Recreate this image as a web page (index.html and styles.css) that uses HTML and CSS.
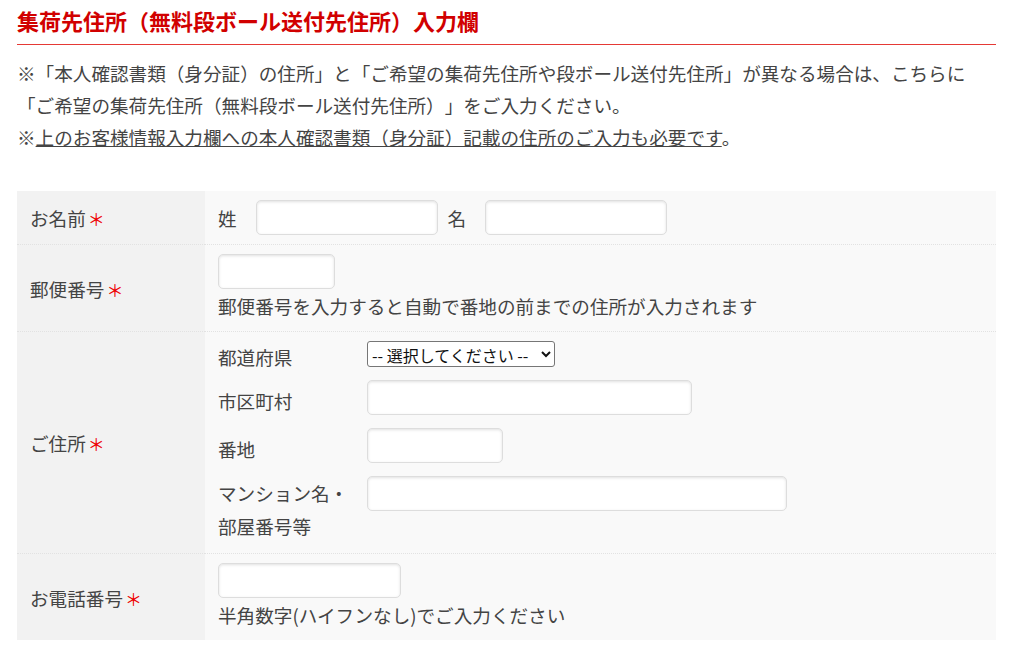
FILE: index.html
```html
<!DOCTYPE html>
<html lang="ja">
<head>
    <meta charset="UTF-8">
    <meta name="viewport" content="width=device-width, initial-scale=1.0">
    <title>集荷先住所入力欄</title>
    <link rel="stylesheet" href="styles.css">
</head>
<body>
    <div class="container">
        <h2 class="section-title">集荷先住所（無料段ボール送付先住所）入力欄</h2>
        <p class="note">
            ※「本人確認書類（身分証）の住所」と「ご希望の集荷先住所や段ボール送付先住所」が異なる場合は、こちらに<br>
            「ご希望の集荷先住所（無料段ボール送付先住所）」をご入力ください。<br>
            ※<span class="underline">上のお客様情報入力欄への本人確認書類（身分証）記載の住所のご入力も必要です</span>。
        </p>

        <table class="form-table">
            <tr>
                <th>お名前<span class="req">＊</span></th>
                <td>
                    <div class="name-fields">
                        <span>姓</span>
                        <input type="text" class="input w-name">
                        <span>名</span>
                        <input type="text" class="input w-name">
                    </div>
                </td>
            </tr>
            <tr>
                <th>郵便番号<span class="req">＊</span></th>
                <td>
                    <input type="text" class="input w-zip">
                    <p class="help">郵便番号を入力すると自動で番地の前までの住所が入力されます</p>
                </td>
            </tr>
            <tr>
                <th>ご住所<span class="req">＊</span></th>
                <td class="address">
                    <div class="sub-row">
                        <span class="sub-label">都道府県</span>
                        <select class="select">
                            <option>-- 選択してください --</option>
                        </select>
                    </div>
                    <div class="sub-row">
                        <span class="sub-label">市区町村</span>
                        <input type="text" class="input w-city">
                    </div>
                    <div class="sub-row">
                        <span class="sub-label">番地</span>
                        <input type="text" class="input w-block">
                    </div>
                    <div class="sub-row top">
                        <span class="sub-label">マンション名・<br>部屋番号等</span>
                        <input type="text" class="input w-building">
                    </div>
                </td>
            </tr>
            <tr>
                <th>お電話番号<span class="req">＊</span></th>
                <td>
                    <input type="text" class="input w-tel">
                    <p class="help">半角数字(ハイフンなし)でご入力ください</p>
                </td>
            </tr>
        </table>
    </div>
</body>
</html>
```

FILE: styles.css
```css
body {
    margin: 0;
    background: #fff;
    color: #444;
    font-family: "Noto Sans CJK JP", "Noto Sans", sans-serif;
    font-size: 18.6px;
    text-spacing-trim: space-all;
}
.container {
    padding: 0 28px 0 17px;
}
.section-title {
    margin: 4px 0 0;
    padding-bottom: 8px;
    line-height: 32px;
    font-size: 22px;
    font-weight: bold;
    color: #d10000;
    border-bottom: 1px solid #e53935;
}
.note {
    margin: 12px 0 38px;
    line-height: 32px;
}
.underline { text-decoration: underline; }

.form-table {
    width: 100%;
    border-collapse: collapse;
}
.form-table th,
.form-table td {
    border-bottom: 1px dotted #e2e2e2;
    vertical-align: middle;
    text-align: left;
}
.form-table tr:last-child th,
.form-table tr:last-child td { border-bottom: none; }
.form-table th {
    width: 162px;
    padding: 0 13px;
    background: #f2f2f2;
    font-weight: normal;
}
.form-table td {
    padding: 9px 13px;
    background: #f9f9f9;
}
.form-table td.address { padding-bottom: 11px; }
.req {
    color: #e00;
    font-size: 17px;
    margin-left: 2px;
}
.name-fields {
    display: flex;
    align-items: center;
}
.name-fields span { margin-right: 19px; }
.name-fields input { margin-right: 10px; }

.input {
    display: block;
    box-sizing: border-box;
    height: 35px;
    border: 1px solid #ddd;
    border-radius: 5px;
    background: #fff;
    box-shadow: inset 0 1px 3px rgba(0,0,0,0.12);
}
.w-name { width: 182px; }
.w-zip { width: 117px; }
.w-city { width: 325px; }
.w-block { width: 136px; }
.w-building { width: 420px; }
.w-tel { width: 183px; }
.help {
    margin: 0;
    line-height: 33px;
}

.sub-row {
    display: flex;
    align-items: center;
    margin-bottom: 13px;
}
.sub-row:last-child { margin-bottom: 0; }
.sub-row.top { align-items: flex-start; }
.sub-label {
    width: 149px;
    height: 26px;
    flex-shrink: 0;
    line-height: 32px;
    white-space: nowrap;
}
.sub-row.top .sub-label {
    height: auto;
    line-height: 33px;
}
.select {
    height: 26px;
    width: 188px;
    font-family: "Noto Sans CJK JP", sans-serif;
    font-size: 16px;
    color: #111;
    border: 1px solid #767676;
    border-radius: 3px;
    background: #fff;
}
```
